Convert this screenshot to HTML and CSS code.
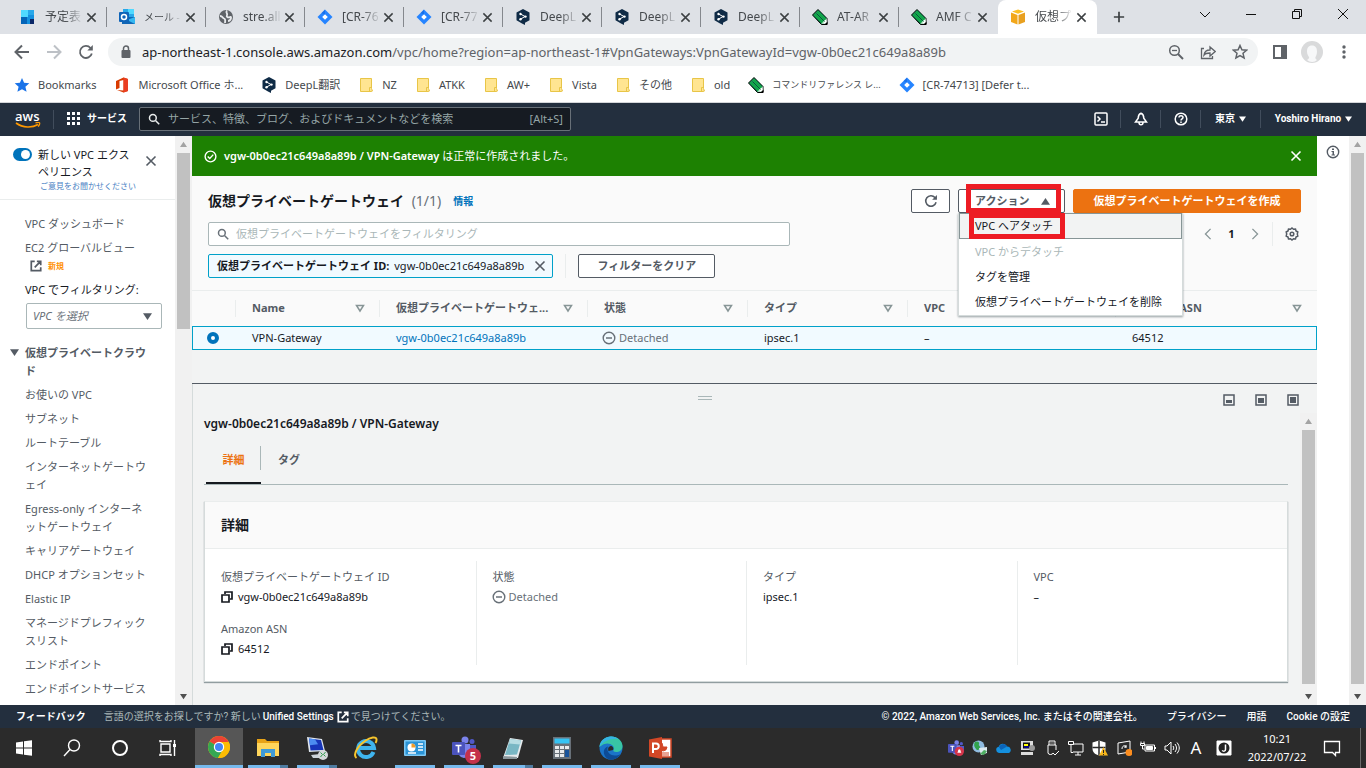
FILE: index.html
```html
<!DOCTYPE html>
<html lang="ja">
  <head>
    <meta charset="UTF-8" />
    <meta name="viewport" content="width=device-width, initial-scale=1.0" />
    <title>仮想プライベートゲートウェイ | VPC</title>
    <link rel="stylesheet" href="styles.css">
  </head>
  <body>
    <!-- Shared icons -->
    <svg class="sprite" aria-hidden="true">
      <symbol id="i-x" viewBox="0 0 12 12"><path d="M1.5 1.5l9 9M10.5 1.5l-9 9" fill="none" stroke="currentColor" stroke-width="1.6" /></symbol>
      <symbol id="i-deepl" viewBox="0 0 16 16"><path d="M8 0l6.5 3.6v7.6L10 13.7V16l-3-1.600L1.500 11.200V3.600z" fill="#0f2b46" /><path d="M5.500 5l4.500 2.500L5.500 10.200" fill="none" stroke="#fff" /><circle cx="5.500" cy="5" r="1.200" fill="#fff" /><circle cx="10.500" cy="7.600" r="1.200" fill="#fff" /><circle cx="5.500" cy="10.200" r="1.200" fill="#fff" /></symbol>
      <symbol id="i-jira" viewBox="0 0 16 16"><path d="M8 .5L15.500 8 8 15.500.5 8z" fill="#2684ff" /><path d="M8 5.200L10.800 8 8 10.800 5.200 8z" fill="#fff" /><path d="M8 .5L4.500 4 8 5.500z" fill="#0052cc" opacity=".4" /></symbol>
      <symbol id="i-pencil" viewBox="0 0 16 16"><path d="M.5 6L6 .5 15 9.500V15.500H9.500z" fill="#1c9a56" stroke="#000" /><path d="M9.500 14.500L14.500 9.500l.5 5.500z" fill="#fff" /><path d="M3 5.500l8 8M5.500 3l8 8" stroke="#0b3" /><path d="M2 7l7 7M4.500 4.500l8 8M7 2l7 7" stroke="#063" /><path d="M12.500 15.500h3v-3z" fill="#000" /></symbol>
      <symbol id="i-folder" viewBox="0 0 16 16"><path d="M2.500 1.500h11v10l1 2.500-1.500.5H2.500z" fill="#ffe591" stroke="#e8c547" /><path d="M11.500 14.500v-4h2" fill="none" stroke="#e8c547" /></symbol>
      <symbol id="i-search" viewBox="0 0 16 16"><circle cx="6.500" cy="6.500" r="4.500" fill="none" stroke="currentColor" stroke-width="2" /><path d="M10 10l5 5" stroke="currentColor" stroke-width="2" /></symbol>
      <symbol id="i-ext" viewBox="0 0 14 14"><path d="M5.500 1.500h-4v11h11v-4M8 1.500h4.500V6M12 2L5.500 8.500" fill="none" stroke="currentColor" stroke-width="2" /></symbol>
      <symbol id="i-reload" viewBox="0 0 16 16"><path d="M13.800 9.500A6 6 0 1 1 12.500 4l1 1" fill="none" stroke="currentColor" stroke-width="1.800" /><path d="M14.800 1v5.500H9.300z" fill="currentColor" /></symbol>
      <symbol id="i-minus" viewBox="0 0 14 14"><circle cx="7" cy="7" r="5.800" fill="none" stroke="currentColor" stroke-width="1.400" /><path d="M4 7h6" stroke="currentColor" stroke-width="1.500" /></symbol>
      <symbol id="i-copy" viewBox="0 0 12 12"><path d="M4 3V1h7v7H9" fill="none" stroke="currentColor" stroke-width="1.700" /><path d="M1 4h7v7H1z" fill="#fff" stroke="currentColor" stroke-width="1.700" /></symbol>
      <symbol id="i-down" viewBox="0 0 10 10"><path d="M0 1.500h10L5 9z" fill="currentColor" /></symbol>
      <symbol id="i-up" viewBox="0 0 10 10"><path d="M0 8.500h10L5 1z" fill="currentColor" /></symbol>
      <symbol id="i-sort" viewBox="0 0 10 10"><path d="M1.500 2.500h7L5 8z" fill="none" stroke="currentColor" stroke-width="1.500" /></symbol>
      <symbol id="i-teams" viewBox="0 0 24 24"><circle cx="13" cy="4" r="3.500" fill="#7b83eb" /><circle cx="20" cy="5.500" r="2.500" fill="#5059c9" /><path d="M16 9h8v7a4 4 0 0 1-7 2z" fill="#5059c9" /><path d="M7 8h11v9a6 6 0 0 1-11 2z" fill="#7b83eb" /><rect y="6" width="13" height="13" rx="1" fill="#4b53bc" /><path d="M3.500 9.500h6M6.500 9.500v7" stroke="#fff" stroke-width="1.600" /></symbol>
    </svg>

    <!-- Browser tabs -->
    <div class="tab-strip">
      <div class="tab"><svg class="fav" viewBox="0 0 16 16"><rect x="1" y="1" width="13" height="14" rx="1" fill="#1490df" /><path d="M1 1h7v7H1z" fill="#50d9ff" /><path d="M8 1h6v5H8z" fill="#28a8ea" /><path d="M1 8h6v7H1z" fill="#0364b8" /><path d="M10 10h4v5h-4z" fill="#0a2767" /></svg><span class="tab-title">予定表</span><button aria-label="閉じる"><svg><use href="#i-x" /></svg></button></div>
      <div class="tab"><svg class="fav" viewBox="0 0 16 16"><path d="M4 0h11v9H4z" fill="#28a8ea" /><path d="M9 0h6v5H9z" fill="#50d9ff" /><path d="M3 8l13 0v7H3z" fill="#1066b5" /><path d="M16 8v7l-8-4z" fill="#35b8f1" /><rect y="3" width="10" height="10" rx="1" fill="#0f64b8" /><circle cx="5" cy="8" r="2.500" fill="none" stroke="#fff" stroke-width="1.500" /></svg><span class="tab-title kana">メール -</span><button aria-label="閉じる"><svg><use href="#i-x" /></svg></button></div>
      <div class="tab"><svg class="fav" viewBox="0 0 16 16"><circle cx="8" cy="8" r="7" fill="#5f6368" /><path d="M2 7c3 0 2 2 4 2.500S7 13 7 14M9 1.500C7 4 10 4 9 6s1 3 3 2 1 4-2 4" fill="none" stroke="#e8eaed" stroke-width="1.800" /></svg><span class="tab-title">stre.all</span><button aria-label="閉じる"><svg><use href="#i-x" /></svg></button></div>
      <div class="tab"><svg class="fav"><use href="#i-jira" /></svg><span class="tab-title">[CR-76</span><button aria-label="閉じる"><svg><use href="#i-x" /></svg></button></div>
      <div class="tab"><svg class="fav"><use href="#i-jira" /></svg><span class="tab-title">[CR-77</span><button aria-label="閉じる"><svg><use href="#i-x" /></svg></button></div>
      <div class="tab"><svg class="fav"><use href="#i-deepl" /></svg><span class="tab-title">DeepL</span><button aria-label="閉じる"><svg><use href="#i-x" /></svg></button></div>
      <div class="tab"><svg class="fav"><use href="#i-deepl" /></svg><span class="tab-title">DeepL</span><button aria-label="閉じる"><svg><use href="#i-x" /></svg></button></div>
      <div class="tab"><svg class="fav"><use href="#i-deepl" /></svg><span class="tab-title">DeepL</span><button aria-label="閉じる"><svg><use href="#i-x" /></svg></button></div>
      <div class="tab"><svg class="fav"><use href="#i-pencil" /></svg><span class="tab-title">AT-AR</span><button aria-label="閉じる"><svg><use href="#i-x" /></svg></button></div>
      <div class="tab last"><svg class="fav"><use href="#i-pencil" /></svg><span class="tab-title">AMF C</span><button aria-label="閉じる"><svg><use href="#i-x" /></svg></button></div>
      <div class="tab active"><svg class="fav" viewBox="0 0 16 16"><path d="M8 .5l6 2-6 2.300-6-2.300z" fill="#fbbf24" /><path d="M1 3.500L7.500 6v9.500L1 13z" fill="#f2a71b" /><path d="M15 3.500L8.500 6v9.500L15 13z" fill="#e8a020" /></svg><span class="tab-title">仮想プ</span><button aria-label="閉じる"><svg><use href="#i-x" /></svg></button></div>
      <button class="new-tab" aria-label="新しいタブ"><svg viewBox="0 0 14 14"><path d="M7 1v12M1 7h12" stroke="#3c4043" stroke-width="2" /></svg></button>
      <div class="window-controls">
        <button aria-label="タブを検索"><svg viewBox="0 0 12 12"><path d="M1 4l5 5 5-5" /></svg></button>
        <button aria-label="最小化"><svg viewBox="0 0 12 12"><path d="M1 6.500h10" /></svg></button>
        <button aria-label="元に戻す"><svg viewBox="0 0 12 12"><path d="M1.500 3.500h7v7h-7zM3.500 3.500v-2h7v7h-2" /></svg></button>
        <button aria-label="閉じる"><svg viewBox="0 0 12 12"><path d="M1 1l10 10M11 1L1 11" /></svg></button>
      </div>
    </div>

    <!-- Address bar -->
    <div class="toolbar">
      <button aria-label="戻る"><svg viewBox="0 0 16 16"><path d="M15 8H2M8 1.500L1.500 8 8 14.500" fill="none" stroke="#5f6368" stroke-width="2" /></svg></button>
      <button aria-label="進む"><svg viewBox="0 0 16 16"><path d="M1 8h13M8 1.500L14.500 8 8 14.500" fill="none" stroke="#bdc1c6" stroke-width="2" /></svg></button>
      <button aria-label="再読み込み"><svg><use href="#i-reload" /></svg></button>
      <div class="address">
        <svg class="lock" viewBox="0 0 12 14"><rect x="1.500" y="5" width="9" height="8" rx="1" fill="#5f6368" /><path d="M3.500 6V3.500a2.500 2.500 0 0 1 5 0V6" fill="none" stroke="#5f6368" stroke-width="1.500" /></svg>
        <span class="url"><b>ap-northeast-1.console.aws.amazon.com</b>/vpc/home?region=ap-northeast-1#VpnGateways:VpnGatewayId=vgw-0b0ec21c649a8a89b</span>
        <button aria-label="ズーム"><svg viewBox="0 0 16 16"><circle cx="6.500" cy="6.500" r="4.800" fill="none" stroke="#5f6368" stroke-width="1.500" /><path d="M10 10l5 5" stroke="#5f6368" stroke-width="2" /><path d="M4 6.500h5" stroke="#5f6368" stroke-width="1.300" /></svg></button>
        <button aria-label="共有"><svg viewBox="0 0 16 16"><path d="M4 4.500H1.500v10h11V12" fill="none" stroke="#5f6368" stroke-width="1.300" /><path d="M4 11c.5-4 3-5 6-5V3l5.200 4.500L10 12V9c-3 0-4.500 0-6 2z" fill="none" stroke="#5f6368" stroke-width="1.300" /></svg></button>
        <button aria-label="ブックマーク"><svg viewBox="0 0 16 16"><path d="M8 1.500l1.900 4.300 4.700.4-3.600 3.100 1.100 4.600L8 11.500l-4.100 2.400L5 9.300 1.400 6.200l4.700-.4z" fill="none" stroke="#5f6368" stroke-width="1.500" /></svg></button>
      </div>
      <button aria-label="サイドパネル"><svg viewBox="0 0 16 16"><path d="M2 2h12v12H2z" fill="none" stroke="#5f6368" stroke-width="2" /><path d="M9 2h5v12H9z" fill="#5f6368" /></svg></button>
      <button aria-label="プロフィール"><svg class="avatar" viewBox="0 0 22 22"><circle cx="11" cy="11" r="11" fill="#d9dadb" /><path d="M11 4.500c-3.500 0-5 2.500-5 6 0 3 1.500 4.500 2 5.500s-.5 2-2 3c3 2.500 7.500 2.500 10 0-1.500-1-2-2-1.500-3s1.500-2.500 1.500-5.500c0-3.500-1.500-6-5-6z" fill="#f7f8f9" /></svg></button>
      <button aria-label="メニュー"><svg viewBox="0 0 16 16" fill="#5f6368"><circle cx="8" cy="3" r="1.700" /><circle cx="8" cy="8" r="1.700" /><circle cx="8" cy="13" r="1.700" /></svg></button>
    </div>

    <!-- Bookmarks -->
    <nav class="bookmarks">
      <a href="#"><svg viewBox="0 0 16 16"><path d="M8 1l2.100 4.800 5.200.5-3.900 3.400 1.200 5.100L8 12.200l-4.600 2.600 1.200-5.100L.7 6.300l5.200-.5z" fill="#1a73e8" /></svg>Bookmarks</a>
      <a href="#"><svg viewBox="0 0 16 16"><path d="M9.500.5L14 2v12l-4.500 1.500L3 13l6.500.5V3L5.500 4v7L2 12.500V4z" fill="#d83b01" /><path d="M9.500.5L14 2v12l-4.500 1.500z" fill="#ea3e23" /></svg>Microsoft Office ホ...</a>
      <a href="#"><svg><use href="#i-deepl" /></svg>DeepL翻訳</a>
      <a href="#"><svg><use href="#i-folder" /></svg>NZ</a>
      <a href="#"><svg><use href="#i-folder" /></svg>ATKK</a>
      <a href="#"><svg><use href="#i-folder" /></svg>AW+</a>
      <a href="#"><svg><use href="#i-folder" /></svg>Vista</a>
      <a href="#"><svg><use href="#i-folder" /></svg>その他</a>
      <a href="#"><svg><use href="#i-folder" /></svg>old</a>
      <a href="#" class="kana"><svg><use href="#i-pencil" /></svg>コマンドリファレンス レ...</a>
      <a href="#"><svg><use href="#i-jira" /></svg>[CR-74713] [Defer t...</a>
    </nav>

    <!-- AWS header -->
    <header class="aws-header">
      <a href="#" class="logo"><b>aws</b><svg viewBox="0 0 26 7"><path d="M1 1c7 5 16 5 22 1.500" fill="none" stroke="#ff9900" stroke-width="1.600" /><path d="M20.500.8c2-.5 3.500-.4 4 0s0 2.300-1.300 3.900" fill="none" stroke="#ff9900" stroke-width="1.300" /></svg></a>
      <button class="services"><svg viewBox="0 0 14 14" fill="#fff"><path d="M0 0h3v3H0zM5 0h3v3H5zM10 0h3v3h-3zM0 5h3v3H0zM5 5h3v3H5zM10 5h3v3h-3zM0 10h3v3H0zM5 10h3v3H5zM10 10h3v3h-3z" /></svg>サービス</button>
      <label class="global-search">
        <svg><use href="#i-search" /></svg>
        <input type="text" placeholder="サービス、特徴、ブログ、およびドキュメントなどを検索" aria-label="検索" />
        <span>[Alt+S]</span>
      </label>
      <div class="header-right">
        <button aria-label="CloudShell"><svg viewBox="0 0 14 14"><rect x="1" y="1" width="12" height="12" rx="1" /><path d="M3.500 4.500L6 7 3.500 9.500M7 10h4" /></svg></button>
        <button aria-label="通知"><svg viewBox="0 0 14 14"><path d="M7 1.200c-2 .8-2.800 2-2.800 5L1.500 10h11L9.800 6.200c0-3-.8-4.200-2.800-5zM5 10.500c0 3 4 3 4 0" /></svg></button>
        <button aria-label="ヘルプ"><svg viewBox="0 0 14 14"><circle cx="7" cy="7" r="5.800" /><path d="M5 5.500c0-2.500 4-2.500 4 0C9 7 7 6.800 7 8.500M7 9.500v1.500" /></svg></button>
        <button class="region">東京<svg class="caret"><use href="#i-down" /></svg></button>
        <button class="user">Yoshiro Hirano<svg class="caret"><use href="#i-down" /></svg></button>
      </div>
    </header>

    <div class="console">
      <!-- Side navigation -->
      <aside class="sidebar">
        <div class="experience">
          <input type="checkbox" id="new-exp" checked />
          <div class="exp-text">
            <label for="new-exp">新しい VPC エクスペリエンス</label>
            <a href="#">ご意見をお聞かせください</a>
          </div>
          <button aria-label="閉じる"><svg><use href="#i-x" /></svg></button>
        </div>
        <nav class="side-nav">
          <a href="#">VPC ダッシュボード</a>
          <a href="#">EC2 グローバルビュー <span class="new-row"><svg><use href="#i-ext" /></svg><b>新規</b></span></a>
          <label for="vpc-filter">VPC でフィルタリング:</label>
          <div class="select-wrap">
            <select id="vpc-filter"><option>VPC を選択</option></select>
            <svg><use href="#i-down" /></svg>
          </div>
          <h3><svg><use href="#i-down" /></svg>仮想プライベートクラウド</h3>
          <a href="#">お使いの VPC</a>
          <a href="#">サブネット</a>
          <a href="#">ルートテーブル</a>
          <a href="#">インターネットゲートウェイ</a>
          <a href="#">Egress-only インターネットゲートウェイ</a>
          <a href="#">キャリアゲートウェイ</a>
          <a href="#">DHCP オプションセット</a>
          <a href="#">Elastic IP</a>
          <a href="#">マネージドプレフィックスリスト</a>
          <a href="#">エンドポイント</a>
          <a href="#">エンドポイントサービス</a>
        </nav>
      </aside>
      <div class="scrollbar side-scroll"><svg class="off"><use href="#i-up" /></svg><i></i><svg><use href="#i-down" /></svg></div>

      <main>
        <div class="flash">
          <svg viewBox="0 0 14 14"><circle cx="7" cy="7" r="5.800" fill="none" stroke="#fff" stroke-width="1.500" /><path d="M4 7l2.200 2.200L10 5" fill="none" stroke="#fff" stroke-width="1.500" /></svg>
          <p><b>vgw-0b0ec21c649a8a89b / VPN-Gateway</b> は正常に作成されました。</p>
          <button aria-label="閉じる"><svg><use href="#i-x" /></svg></button>
        </div>

        <section class="resources">
          <div class="title-row">
            <h1>仮想プライベートゲートウェイ <span>(1/1)</span></h1>
            <a href="#">情報</a>
            <div class="actions">
              <button class="btn refresh" aria-label="更新"><svg><use href="#i-reload" /></svg></button>
              <div class="dropdown">
                <button class="btn action-btn">アクション<svg><use href="#i-up" /></svg></button>
                <div class="menu">
                  <button class="selected">VPC へアタッチ</button>
                  <button disabled>VPC からデタッチ</button>
                  <button>タグを管理</button>
                  <button>仮想プライベートゲートウェイを削除</button>
                </div>
                <div class="mark mark-action"></div>
                <div class="mark mark-attach"></div>
              </div>
              <button class="btn primary">仮想プライベートゲートウェイを作成</button>
            </div>
          </div>

          <div class="filter-row">
            <label class="filter-input">
              <svg><use href="#i-search" /></svg>
              <input type="text" placeholder="仮想プライベートゲートウェイをフィルタリング" aria-label="フィルタリング" />
            </label>
            <div class="pager">
              <button aria-label="前へ"><svg viewBox="0 0 10 14"><path d="M8 1L2 7l6 6" /></svg></button>
              <b>1</b>
              <button aria-label="次へ"><svg viewBox="0 0 10 14"><path d="M2 1l6 6-6 6" /></svg></button>
              <button class="gear" aria-label="設定"><svg viewBox="0 0 14 14"><path d="M7 1l1.500 1.300 2-.3.500 2L12.800 5 12.300 7l.5 2-1.800 1-.5 2-2-.3L7 13l-1.500-1.300-2 .3-.5-2L1.200 9l.5-2-.5-2L3 4l.5-2 2 .3z" /><circle cx="7" cy="7" r="1.800" /></svg></button>
            </div>
          </div>

          <div class="token-row">
            <div class="token"><b>仮想プライベートゲートウェイ ID:</b> vgw-0b0ec21c649a8a89b<button aria-label="削除"><svg><use href="#i-x" /></svg></button></div>
            <div class="clear"><button class="btn">フィルターをクリア</button></div>
          </div>

          <table>
            <colgroup><col class="c-radio" /><col class="c-name" /><col class="c-wide" /><col class="c-mid" /><col class="c-mid" /><col class="c-wide" /><col /></colgroup>
            <thead>
              <tr>
                <th></th>
                <th><div>Name<svg><use href="#i-sort" /></svg></div></th>
                <th><div>仮想プライベートゲートウェ...<svg><use href="#i-sort" /></svg></div></th>
                <th><div>状態<svg><use href="#i-sort" /></svg></div></th>
                <th><div>タイプ<svg><use href="#i-sort" /></svg></div></th>
                <th><div>VPC<svg><use href="#i-sort" /></svg></div></th>
                <th><div>Amazon ASN<svg><use href="#i-sort" /></svg></div></th>
              </tr>
            </thead>
            <tbody>
              <tr>
                <td><input type="radio" name="gateway" aria-label="VPN-Gateway" checked /></td>
                <td>VPN-Gateway</td>
                <td><a href="#">vgw-0b0ec21c649a8a89b</a></td>
                <td><span class="status"><svg><use href="#i-minus" /></svg>Detached</span></td>
                <td>ipsec.1</td>
                <td>–</td>
                <td>64512</td>
              </tr>
            </tbody>
          </table>
        </section>

        <!-- Split panel -->
        <section class="split">
          <div class="split-bar">
            <span class="handle"></span>
            <div class="split-sizes">
              <button aria-label="小"><svg viewBox="0 0 12 12"><path d="M1 1h10v10H1z" /><path class="fill" d="M3 6h6v3H3z" /></svg></button>
              <button aria-label="中"><svg viewBox="0 0 12 12"><path d="M1 1h10v10H1z" /><path class="fill" d="M3 4h6v5H3z" /></svg></button>
              <button aria-label="大"><svg viewBox="0 0 12 12"><path d="M1 1h10v10H1z" /><path class="fill" d="M3 3h6v6H3z" /></svg></button>
            </div>
          </div>
          <div class="split-body">
            <div class="detail">
              <h2>vgw-0b0ec21c649a8a89b / VPN-Gateway</h2>
              <div class="detail-tabs">
                <button class="on">詳細</button>
                <button>タグ</button>
              </div>
              <div class="card">
                <h3>詳細</h3>
                <div class="card-cols">
                  <dl>
                    <dt>仮想プライベートゲートウェイ ID</dt>
                    <dd><svg><use href="#i-copy" /></svg>vgw-0b0ec21c649a8a89b</dd>
                    <dt>Amazon ASN</dt>
                    <dd><svg><use href="#i-copy" /></svg>64512</dd>
                  </dl>
                  <dl>
                    <dt>状態</dt>
                    <dd><span class="status"><svg><use href="#i-minus" /></svg>Detached</span></dd>
                  </dl>
                  <dl>
                    <dt>タイプ</dt>
                    <dd>ipsec.1</dd>
                  </dl>
                  <dl>
                    <dt>VPC</dt>
                    <dd>–</dd>
                  </dl>
                </div>
              </div>
            </div>
            <div class="scrollbar"><svg class="off"><use href="#i-up" /></svg><i></i><svg><use href="#i-down" /></svg></div>
          </div>
        </section>
      </main>

      <div class="help"><button aria-label="情報"><svg viewBox="0 0 14 14"><circle cx="7" cy="7" r="5.700" fill="none" stroke="#545b64" stroke-width="1.400" /><path d="M6 3.500h2v1.500H6zM5.500 6H8v3.500h1v1H5.500v-1h1V7h-1z" fill="#545b64" /></svg></button></div>
      <div class="scrollbar"><svg class="off"><use href="#i-up" /></svg><i></i><svg><use href="#i-down" /></svg></div>
    </div>

    <footer>
      <button>フィードバック</button>
      <p>言語の選択をお探しですか? 新しい <a href="#">Unified Settings <svg><use href="#i-ext" /></svg></a> で見つけてください。</p>
      <span class="copyright">© 2022, Amazon Web Services, Inc. またはその関連会社。</span>
      <a href="#">プライバシー</a>
      <a href="#">用語</a>
      <a href="#">Cookie の設定</a>
    </footer>

    <!-- Windows taskbar -->
    <div class="taskbar">
      <button aria-label="スタート"><svg viewBox="0 0 24 24" fill="#fff"><path d="M4 6.500l7-1V11.500H4zM12 5.300l8-1.100v7.300h-8zM4 12.500h7v6l-7-1zM12 12.500h8v7.300l-8-1.100z" /></svg></button>
      <button aria-label="検索"><svg viewBox="0 0 24 24" fill="none" stroke="#fff" stroke-width="1.400"><circle cx="14" cy="9.500" r="5.500" /><path d="M10 13.500L4 20" /></svg></button>
      <button aria-label="Cortana"><svg viewBox="0 0 24 24"><circle cx="12" cy="12" r="7" fill="none" stroke="#fff" stroke-width="2" /></svg></button>
      <button aria-label="タスクビュー"><svg viewBox="0 0 24 24" fill="none" stroke="#fff" stroke-width="1.400"><path d="M5 8h9v8H5zM4 4v1.500h11V4M4 20v-1.500h11V20M18.500 4v16" /><path d="M17 8h3v3h-3z" fill="#fff" stroke="none" /></svg></button>
      <div class="apps">
        <button class="current" aria-label="Chrome"><svg viewBox="0 0 24 24"><circle cx="12" cy="12" r="11" fill="#fbbc04" /><path d="M12 12L2.500 6.500a11 11 0 0 1 19 0z" fill="#ea4335" /><path d="M12 12L2.500 6.500a11 11 0 0 0 8.500 16.500l5-8.500z" fill="#34a853" /><path d="M12 7h9.700a11 11 0 0 1-10.700 16l5-8.500z" fill="#fbbc04" /><circle cx="12" cy="12" r="5.200" fill="#fff" /><circle cx="12" cy="12" r="4" fill="#4285f4" /></svg></button>
        <button class="open more" aria-label="エクスプローラー"><svg viewBox="0 0 24 24"><path d="M1 3h8l2 2h12v15H1z" fill="#e8a317" /><path d="M1 7h22v13H1z" fill="#ffd65c" /><path d="M5 21v-8h14v8h-4v-4H9v4z" fill="#3f9ad6" /></svg></button>
        <button class="open more" aria-label="リモートデスクトップ"><svg viewBox="0 0 24 24"><path d="M2 1l15 2 3 12-16 1z" fill="#dfe6ee" /><path d="M4 2.500l12 1.500 2.500 10-13 .5z" fill="#1735b8" /><path d="M4 2.500l6 .8 3 5-8 1z" fill="#4c8cf0" /><path d="M6 19l9-1 3 4H8z" fill="#cdd3da" /><circle cx="18" cy="19" r="5" fill="#d5d8da" /><path d="M15.500 16.500l2 2-2 2.500M20.500 16l-2 2.500 2 2" fill="none" stroke="#2e9e4b" /></svg></button>
        <button aria-label="Internet Explorer"><svg viewBox="0 0 24 24"><path d="M19.500 16A8 8 0 1 1 20 12H6" fill="none" stroke="#3fb4ee" stroke-width="4" /><path d="M2.500 22c-4-3 1-12 8.500-17 5-3.500 12-5.500 11.500-1 0 1-.3 2-1 3" fill="none" stroke="#f7c52d" stroke-width="2" /></svg></button>
        <button class="open" aria-label="コントロールパネル"><svg viewBox="0 0 24 24"><rect x="1" y="4" width="22" height="16" rx="1" fill="#7cc8f4" /><rect x="2.500" y="5.500" width="19" height="13" fill="#2a93d6" /><circle cx="8.500" cy="11.500" r="4" fill="#fff" /><path d="M8.500 11.500v-4a4 4 0 0 1 4 4z" fill="#f39c27" /><path d="M15 8h5M15 11h5M15 14h5M5 17h8" stroke="#fff" stroke-width="1.400" /></svg></button>
        <button class="open" aria-label="Teams"><svg viewBox="0 0 24 24"><use href="#i-teams" /></svg><span class="badge">5</span></button>
        <button class="open more" aria-label="メモ帳"><svg viewBox="0 0 24 24"><path d="M9 2l13 2-5 18H2z" fill="#e6ebee" /><path d="M9 3l11 1.500-4 14L4 19z" fill="#79b7c4" /><path d="M9 3l11 1.500-1 4-11-1z" fill="#b8dde3" /><path d="M2 20l14 1v2H2z" fill="#8b979c" /></svg></button>
        <button class="open" aria-label="電卓"><svg viewBox="0 0 24 24"><rect x="3" y="1" width="18" height="22" fill="#687078" /><path d="M4.500 2.500h15v5h-15z" fill="#35c3f3" /><path d="M5 10h4v3H5zM10 10h4v3h-4zM15 10h4v3h-4zM5 14h4v3H5zM10 14h4v3h-4zM5 18h4v3H5zM10 18h4v3h-4z" fill="#e8eaec" /><path d="M15 14h4v7h-4z" fill="#19539a" /></svg></button>
        <button class="open" aria-label="Edge"><svg viewBox="0 0 24 24"><circle cx="12" cy="12" r="11.500" fill="#1b74c9" /><path d="M.5 11C1 4 7 .5 12 .5c7 0 11.500 5 11.500 9.500 0 4-3 6-6.500 6-2 0-3-1-2.500-2 2-4-4-8-9-6-2 .7-4 2-5 3z" fill="#38c5a5" /><path d="M.5 11C1 4 7 .5 12 .5c3 0 5.500 1 7.500 2.500C12 2 4 5 .5 11z" fill="#35b4e3" /><path d="M9 10.500c-2 4 1 9 7 9 2 0 4-.5 5.500-1.500-2 4-6 5.500-9.500 5.500-5 0-8-5-7-9 .5-2 2-3.500 4-4z" fill="#0d4b96" /><path d="M14 14c1-1.500 0-3-1.500-4-3 0-4 2.500-3 5z" fill="#2b2b2b" /></svg></button>
        <button class="open" aria-label="PowerPoint"><svg viewBox="0 0 24 24"><path d="M10 3h13v18H10z" fill="#fff" stroke="#d24726" stroke-width="1.500" /><path d="M14 7a4 4 0 1 0 5 4h-4zM14 17h7M14 19h7" fill="#d24726" stroke="#d24726" /><path d="M1 3.500L14 1v22L1 20.500z" fill="#d24726" /><path d="M5 17V7.500h3a2.500 2.500 0 0 1 0 5.500H5" fill="none" stroke="#fff" stroke-width="2" /></svg></button>
      </div>
      <div class="tray">
        <svg viewBox="0 0 24 24"><use href="#i-teams" /><circle cx="17" cy="17" r="7" fill="#d5354a" /><path d="M14 19h6l-1-2c0-4-4-4-4 0z" fill="#fff" /></svg>
        <svg viewBox="0 0 16 16"><circle cx="6.500" cy="6.500" r="6" fill="#8fbbe0" /><path d="M3 2c2-1.500 5 0 4 2s2 2 1 4-3 3-4 1-3-3-1-7z" fill="#31a24c" /><path d="M7 8l8-1v6l-6 2z" fill="#dceaf0" /><path d="M8 14l4-4 3 1-3 4z" fill="#4fae62" /></svg>
        <svg viewBox="0 0 16 16"><path d="M3 13a3.200 3.200 0 0 1-.3-6.300C4 3 9 2.500 11 6.500a3.500 3.500 0 0 1 2 6.500z" fill="#1490df" /><path d="M3 7C5 3 9.500 3 11 6.500L5 10z" fill="#0b64b9" /></svg>
        <svg viewBox="0 0 16 16"><path d="M1 1h12v9H1zM1 12h12v3H1z" fill="#dcdcdc" /><path d="M3 2.500h7v6H3z" fill="#111" /><path d="M4 4h4v2H4z" fill="#ff0" /><path d="M4 7h5" stroke="#00f" /><circle cx="12" cy="8" r="3" fill="#9a9a9a" /></svg>
        <svg class="line" viewBox="0 0 16 16"><path d="M5 5V1h6v4M4 5h8v5M4 5v8c0 2 5 2 5 0M7 2.500v1M9 2.500v1M9 13l2 2 4-4" /></svg>
        <svg class="line" viewBox="0 0 16 16"><path d="M5 4h10v8H5M10 12v3M7 15h6M.5 1.500h5v3h-5zM3 4.500v8h2" /></svg>
        <svg viewBox="0 0 16 16"><path d="M7 .5l6.500 2v6c0 4-3 6-6.500 7-3.500-1-6.500-3-6.500-7v-6z" fill="#fff" /><path d="M7 .5v15M.5 7.500h13" stroke="#2b2b2b" stroke-width="1.500" /><path d="M11.500 7l4.500 8.500H7z" fill="#f8b71c" /><path d="M11.500 10v3M11.500 14v1" stroke="#222" /></svg>
        <svg class="line" viewBox="0 0 16 16"><path d="M2 3l12-2v11L2 14zM6 9c0-4 4-4 4-2M10 7v1M10 5v2H8" /><circle cx="13" cy="12.500" r="3.500" fill="#fc8d1f" stroke="none" /></svg>
        <svg class="line" viewBox="0 0 16 16"><path d="M5 5h9.500v6H5zM15.500 7v2" /><path d="M6.500 6.500h6v3h-6z" fill="#fff" /><path d="M1 1.500v2M4 1.500v2M.5 3.500h4v2h-4zM2.500 6v3h2" /></svg>
        <svg class="line" viewBox="0 0 16 16"><path d="M1 6h2l4-4v12l-4-4H1zM9 6c1 1.500 1 2.500 0 4M11 4c2 3 2 5 0 8M13 2.500c3 4 3 7 0 11" /></svg>
        <span class="ime">A</span>
        <svg class="line" viewBox="0 0 16 16"><path d="M1 1h14v14H1z" fill="#fff" /><circle cx="8" cy="8" r="5.500" fill="#222" stroke="none" /><path d="M9.500 4.500v5c0 2-2 2-3.500 1" stroke-width="1.500" /></svg>
      </div>
      <div class="clock">10:21<br>2022/07/22</div>
      <button class="notice" aria-label="通知"><svg viewBox="0 0 18 18"><path d="M1.500 2.500h15v11h-4v3l-3-3h-8z" fill="none" stroke="#fff" stroke-width="1.300" /></svg></button>
    </div>
  </body>
</html>
```
FILE: styles.css
```css
/* General */
* {
  box-sizing: border-box;
}

body {
  margin: 0;
  height: 100vh;
  display: flex;
  flex-direction: column;
  overflow: hidden;
  font-family: "Noto Sans", "Noto Sans CJK JP", sans-serif;
  font-size: 11px;
  line-height: 18px;
  color: #16191f;
  background: #fff;
}

button {
  border: none;
  background: none;
  padding: 0;
  margin: 0;
  font: inherit;
  color: inherit;
  cursor: pointer;
  display: flex;
  align-items: center;
  justify-content: center;
}

a {
  text-decoration: none;
  color: inherit;
}

h1,
h2,
h3,
p,
dl,
dd {
  margin: 0;
}

svg {
  display: block;
  flex: none;
  width: 12px;
  height: 12px;
}

input {
  font: inherit;
  margin: 0;
}

.sprite {
  display: none;
}

/* Browser tabs */
.tab-strip {
  flex: none;
  display: flex;
  height: 34px;
  padding-left: 8px;
  background: #dee1e6;
}

.tab {
  display: flex;
  align-items: center;
  flex: 0 1 99px;
  min-width: 0;
  padding: 0 10px 0 12px;
  color: #45494d;
  font-size: 12px;
  background: linear-gradient(#85888d, #85888d) right center / 1px 20px no-repeat;
}

.tab.last {
  background: none;
}

.tab.active {
  background: #fff;
  border-radius: 8px 8px 0 0;
}

.tab-title {
  flex: 1;
  min-width: 0;
  margin: 0 2px 0 9px;
  overflow: hidden;
  white-space: nowrap;
  mask-image: linear-gradient(to right, #000 50%, transparent);
}

.tab-title.kana {
  font-size: 10px;
}

.fav {
  width: 16px;
  height: 16px;
}

.tab button svg {
  width: 11px;
  height: 11px;
  color: #3c4043;
}

.new-tab {
  flex: none;
  width: 44px;
}

.window-controls {
  display: flex;
  flex: none;
  height: 28px;
  margin-left: auto;
}

.window-controls button {
  width: 46px;
}

.window-controls path {
  fill: none;
  stroke: #111;
}

/* Address bar */
.toolbar {
  flex: none;
  display: flex;
  align-items: center;
  height: 36px;
  padding: 0 6px;
}

.toolbar button {
  width: 32px;
  height: 28px;
  color: #5f6368;
}

.toolbar button svg {
  width: 16px;
  height: 16px;
}

.toolbar .avatar {
  width: 22px;
  height: 22px;
}

.address {
  flex: 1;
  display: flex;
  align-items: center;
  min-width: 0;
  height: 28px;
  margin: 0 6px;
  padding: 0 2px 0 12px;
  border-radius: 14px;
  background: #f1f3f4;
}

.lock {
  height: 14px;
  margin-right: 10px;
}

.url {
  flex: 1;
  overflow: hidden;
  white-space: nowrap;
  font-size: 13px;
  color: #5f6368;
}

.url b {
  font-weight: normal;
  color: #202124;
}

/* Bookmarks */
.bookmarks {
  flex: none;
  display: flex;
  align-items: center;
  gap: 18px;
  height: 33px;
  padding: 0 14px 2px;
  border-bottom: 1px solid #d4d6d9;
  color: #45494d;
  white-space: nowrap;
}

.bookmarks a {
  display: flex;
  align-items: center;
  gap: 8px;
}

.bookmarks svg {
  width: 16px;
  height: 16px;
}

.bookmarks .kana {
  font-size: 9px;
}

/* AWS header */
.aws-header {
  flex: none;
  display: flex;
  align-items: center;
  height: 33px;
  padding: 0 0 1px 15px;
  background: #232f3e;
  color: #fff;
  font-family: Roboto, "Noto Sans CJK JP", sans-serif;
  font-size: 10px;
  font-weight: bold;
}

.logo {
  width: 39px;
  border-right: 1px solid #414d5c;
  font-family: "Open Sans", sans-serif;
  font-size: 13px;
  line-height: 12px;
}

.logo b {
  display: block;
  font-weight: 600;
}

.logo svg {
  width: 26px;
  height: 7px;
}

.services {
  gap: 6px;
  margin: 0 12px 0 13px;
}

.services svg {
  width: 14px;
  height: 14px;
}

.global-search {
  display: flex;
  align-items: center;
  gap: 8px;
  width: 432px;
  height: 24px;
  padding: 0 7px 0 8px;
  border: 1px solid #687078;
  border-radius: 2px;
  background: #161b22;
  font-family: "Noto Sans", "Noto Sans CJK JP", sans-serif;
  font-size: 11px;
  font-weight: normal;
  color: #95a5a6;
}

.global-search svg {
  color: #eaeded;
}

.global-search input,
.filter-input input {
  flex: 1;
  min-width: 0;
  padding: 0;
  border: none;
  outline: none;
  background: none;
  color: inherit;
}

.global-search input::placeholder {
  color: #95a5a6;
}

.header-right {
  display: flex;
  margin-left: auto;
}

.header-right button {
  width: 40px;
  height: 18px;
  border-right: 1px solid #414d5c;
}

.header-right svg {
  width: 14px;
  height: 14px;
  fill: none;
  stroke: #fff;
  stroke-width: 1.500;
}

.header-right .caret {
  width: 7px;
  height: 8px;
  margin-left: 4px;
  stroke: none;
}

.header-right .region {
  width: 60px;
}

.header-right .user {
  width: 105px;
  border: none;
}

/* Console layout */
.console {
  flex: 1;
  display: flex;
  min-height: 0;
}

.sidebar {
  flex: none;
  width: 175px;
  overflow: hidden;
}

.experience {
  display: flex;
  height: 64px;
  padding: 10px 0 0 13px;
  border-bottom: 1px solid #eaeded;
  line-height: 17px;
}

.experience input {
  appearance: none;
  flex: none;
  width: 19px;
  height: 13px;
  margin-top: 2px;
  border-radius: 7px;
  background: #0073bb;
}

.experience input::after {
  content: "";
  display: block;
  width: 9px;
  height: 9px;
  margin: 2px 2px 2px auto;
  border-radius: 50%;
  background: #fff;
}

.exp-text {
  width: 103px;
  padding-left: 6px;
  line-break: anywhere;
}

.exp-text a {
  display: block;
  padding-left: 2px;
  font-size: 8px;
  line-height: 12px;
  color: #4a7fc4;
  white-space: nowrap;
}

.experience button {
  width: 32px;
  height: 30px;
  color: #545b64;
}

.side-nav {
  padding: 15px 24px 0 25px;
  color: #545b64;
}

.side-nav > a {
  display: block;
  margin-bottom: 6px;
  line-break: loose;
}

.side-nav label {
  color: #16191f;
  line-height: 18px;
}

.new-row {
  display: flex;
  align-items: center;
  gap: 6px;
  padding-left: 5px;
  font-size: 8px;
  color: #ff8f00;
}

.new-row svg {
  color: #545b64;
}

.select-wrap {
  display: flex;
  align-items: center;
  height: 26px;
  margin: 4px -11px 15px 1px;
  padding-right: 9px;
  border: 1px solid #aab7b8;
  border-radius: 2px;
}

.select-wrap select {
  appearance: none;
  flex: 1;
  padding: 0 0 0 6px;
  border: none;
  outline: none;
  background: none;
  font: inherit;
  font-style: italic;
  color: #687078;
}

.select-wrap svg,
.side-nav h3 svg {
  width: 9px;
  height: 9px;
  color: #545b64;
}

.side-nav h3 {
  display: flex;
  margin: 0 0 6px -15px;
  font-size: 11px;
  line-break: loose;
}

.side-nav h3 svg {
  margin: 4px 6px 0 0;
}

/* Scrollbars */
.scrollbar {
  flex: none;
  display: flex;
  flex-direction: column;
  align-items: center;
  width: 17px;
  background: #f1f1f1;
}

.scrollbar svg {
  width: 7px;
  height: 17px;
  color: #505050;
}

.scrollbar .off {
  color: #a3a3a3;
}

.scrollbar i {
  flex: 1;
  width: 13px;
  background: #c1c1c1;
}

.scrollbar i + svg {
  margin-top: 4px;
}

.side-scroll i {
  flex: 0 0 31%;
}

.side-scroll i + svg {
  margin-top: auto;
}

/* Main area */
main {
  flex: 1;
  display: flex;
  flex-direction: column;
  min-width: 0;
  background: #f2f3f3;
}

.flash {
  flex: none;
  display: flex;
  align-items: center;
  height: 40px;
  padding: 0 15px 0 12px;
  background: #1d8102;
  color: #fff;
}

.flash > svg {
  width: 13px;
  height: 13px;
}

.flash p {
  flex: 1;
  margin-left: 7px;
}

.flash b {
  font-weight: 600;
}

.resources {
  flex: none;
  padding-bottom: 33px;
  border-bottom: 1px solid #545b64;
}

.title-row,
.filter-row,
.token-row {
  display: flex;
  align-items: center;
  padding: 0 16px;
  background: #fafafa;
}

.title-row {
  height: 46px;
  padding-top: 4px;
}

h1 {
  font-size: 14px;
  white-space: nowrap;
}

h1 span {
  margin-left: 4px;
  font-weight: normal;
  color: #687078;
}

.title-row > a {
  margin-left: 12px;
  font-size: 10px;
  font-weight: bold;
  color: #0073bb;
}

.actions {
  display: flex;
  gap: 8px;
  margin-left: auto;
}

.btn {
  height: 24px;
  padding: 0 18px;
  border: 1px solid #545b64;
  border-radius: 2px;
  background: #fff;
  color: #545b64;
  font-weight: 600;
  white-space: nowrap;
}

.btn svg {
  width: 14px;
  height: 14px;
}

.btn.refresh {
  width: 39px;
  padding: 0;
}

.btn.primary {
  width: 228px;
  border-color: #ec7211;
  background: #ec7211;
  color: #fff;
  font-weight: bold;
}

.dropdown {
  position: relative;
}

.action-btn {
  width: 107px;
  padding: 0 14px 0 16px;
  justify-content: space-between;
}

.action-btn svg {
  width: 9px;
  height: 9px;
}

.menu {
  position: absolute;
  top: 24px;
  left: 0;
  z-index: 1;
  width: 225px;
  height: 103px;
  background: #fff;
  border: 1px solid #d5dbdb;
  border-top: none;
  box-shadow: 0 1px 2px rgba(0, 28, 36, 0.4);
}

.menu button {
  width: 100%;
  height: 25px;
  padding-left: 16px;
  justify-content: flex-start;
}

.menu button:disabled {
  color: #aab7b8;
}

.menu .selected {
  height: 26px;
  padding-left: 15px;
  border: 1px solid #879596;
  background: #f2f3f3;
}

/* Red frames round the two clicks to make */
.mark {
  position: absolute;
  z-index: 2;
  border: 5px solid #ed1c24;
  pointer-events: none;
}

.mark-action {
  top: -5px;
  left: 8px;
  width: 95px;
  height: 29px;
}

.mark-attach {
  top: 24px;
  left: 11px;
  width: 96px;
  height: 26px;
}

.filter-row {
  height: 24px;
  padding-right: 15px;
  justify-content: space-between;
}

.filter-input {
  display: flex;
  align-items: center;
  gap: 7px;
  width: 582px;
  height: 24px;
  padding: 0 8px;
  border: 1px solid #aab7b8;
  border-radius: 2px;
  background: #fff;
}

.filter-input svg {
  color: #687078;
}

.filter-input input::placeholder {
  color: #aab7b8;
}

.pager {
  display: flex;
  align-items: center;
}

.pager button {
  width: 24px;
  height: 24px;
}

.pager b {
  width: 23px;
  text-align: center;
}

.pager path,
.pager circle {
  fill: none;
  stroke: #879596;
  stroke-width: 1.500;
}

.pager .gear {
  width: 30px;
  margin-left: 5px;
  padding-left: 9px;
  border-left: 1px solid #eaeded;
}

.gear svg {
  width: 14px;
  height: 14px;
}

.pager .gear path,
.pager .gear circle {
  stroke: #545b64;
}

.token-row {
  padding-top: 8px;
  padding-bottom: 12px;
}

.token {
  display: flex;
  align-items: center;
  gap: 5px;
  height: 24px;
  padding: 0 6px 0 8px;
  border: 1px solid #00a1c9;
  border-radius: 2px;
  background: #f1faff;
  white-space: nowrap;
}

.token button {
  margin-left: 5px;
  color: #545b64;
}

.clear {
  margin-left: 12px;
  padding-left: 12px;
  border-left: 1px solid #eaeded;
}

/* Table */
table {
  width: 100%;
  table-layout: fixed;
  border-collapse: separate;
  border-spacing: 0;
  border-top: 1px solid #eaeded;
}

.c-radio {
  width: 44px;
}

.c-name {
  width: 144px;
}

.c-wide {
  width: 208px;
}

.c-mid {
  width: 160px;
}

th {
  height: 35px;
  padding: 0 0 2px;
  background: #fafafa;
  color: #545b64;
  text-align: left;
  white-space: nowrap;
}

th div {
  display: flex;
  align-items: center;
  justify-content: space-between;
  padding: 0 15px 0 16px;
}

th:not(:last-child) {
  background: linear-gradient(#eaeded, #eaeded) right center / 1px 17px no-repeat #fafafa;
}

th svg {
  width: 10px;
  height: 10px;
  color: #879596;
}

td {
  height: 24px;
  padding: 0 0 0 16px;
  border: 1px solid #00a1c9;
  border-width: 1px 0;
  background: #f1faff;
}

td:first-child {
  padding-left: 14px;
  border-left-width: 1px;
}

td:last-child {
  border-right-width: 1px;
}

td a {
  color: #0073bb;
}

td input {
  appearance: none;
  display: block;
  width: 12px;
  height: 12px;
  border: 4px solid #0073bb;
  border-radius: 50%;
  background: #fff;
}

.status {
  display: flex;
  align-items: center;
  gap: 3px;
  margin-left: -2px;
  color: #687078;
}

.status svg {
  width: 14px;
  height: 14px;
}

/* Split panel */
.split {
  flex: 1;
  display: flex;
  flex-direction: column;
  min-height: 0;
  border-left: 1px solid #d5dbdb;
}

.split-bar {
  flex: none;
  display: flex;
  height: 29px;
  padding-right: 18px;
}

.handle {
  width: 14px;
  height: 4px;
  margin: 12px auto 0;
  border: 1px solid #aab7b8;
  border-width: 1px 0;
}

.split-sizes {
  display: flex;
  gap: 20px;
  padding: 3px 0 0 6px;
}

.split-sizes path {
  fill: none;
  stroke: #545b64;
  stroke-width: 1.500;
}

.split-sizes .fill {
  fill: #545b64;
  stroke: none;
}

.split-body {
  flex: 1;
  display: flex;
  min-height: 0;
}

.detail {
  flex: 1;
  padding: 2px 12px 0 11px;
}

.detail h2 {
  font-size: 12px;
  font-weight: 600;
}

.detail-tabs {
  display: flex;
  height: 52px;
  padding-left: 2px;
  border-bottom: 1px solid #aab7b8;
}

.detail-tabs button {
  width: 56px;
  padding: 2px 0 0;
  font-weight: bold;
  color: #545b64;
}

.detail-tabs .on {
  width: 55px;
  padding-top: 4px;
  border-bottom: 2px solid #16191f;
  color: #ec7211;
  background: linear-gradient(#aab7b8, #aab7b8) right center / 1px 24px no-repeat;
}

.card {
  margin-top: 16px;
  border: 1px solid #d5dbdb;
  border-top-color: #eaeded;
  background: #fff;
  box-shadow: 0 1px 1px rgba(0, 28, 36, 0.4);
}

.card h3 {
  padding: 14px 16px;
  border-bottom: 1px solid #eaeded;
  background: #fafafa;
  font-size: 14px;
}

.card-cols {
  display: grid;
  grid-template-columns: repeat(4, 1fr);
  padding: 12px 0 16px;
}

.card dl {
  min-height: 104px;
  padding: 7px 0 0 16px;
}

.card dl + dl {
  border-left: 1px solid #eaeded;
}

dt {
  color: #545b64;
}

dd {
  display: flex;
  align-items: center;
  gap: 5px;
  height: 22px;
}

dd + dt {
  margin-top: 12px;
}

dd .status {
  margin-left: -1px;
}

.help {
  flex: none;
  width: 32px;
  padding-top: 9px;
}

.help button {
  margin: 0 auto;
}

.help svg {
  width: 14px;
  height: 14px;
}

/* Footer */
footer {
  flex: none;
  display: flex;
  align-items: center;
  height: 23px;
  padding: 0 16px;
  background: #232f3e;
  color: #fff;
  font-family: Roboto, "Noto Sans CJK JP", sans-serif;
  font-size: 10px;
  font-weight: 500;
  white-space: nowrap;
}

footer button {
  font-weight: bold;
}

footer p {
  display: flex;
  align-items: center;
  gap: 2px;
  margin: 0 auto 0 18px;
  color: #aab7b8;
  font-weight: normal;
}

footer p a {
  display: flex;
  align-items: center;
  gap: 3px;
  margin: 0;
  color: #fff;
  font-weight: 500;
}

footer > a {
  margin-left: 20px;
}

footer .copyright {
  margin-right: 4px;
}

/* Taskbar */
.taskbar {
  flex: none;
  display: flex;
  align-items: center;
  height: 40px;
  background: #2b2b2b;
  color: #fff;
}

.taskbar button {
  position: relative;
  width: 48px;
  height: 40px;
}

.taskbar button svg {
  width: 24px;
  height: 24px;
}

.apps {
  display: flex;
  gap: 1px;
  margin-left: 3px;
}

.taskbar .current {
  background: #565656;
  border-bottom: 3px solid #76b9ed;
}

.open::after {
  content: "";
  position: absolute;
  right: 4px;
  bottom: 0;
  left: 4px;
  height: 3px;
  background: #76b9ed;
}

.more::after {
  background: linear-gradient(to right, #76b9ed 32px, #4f7ba0 32px);
}

.badge {
  position: absolute;
  right: 7px;
  bottom: 4px;
  width: 16px;
  height: 16px;
  border-radius: 50%;
  background: #c4314b;
  font-weight: bold;
  line-height: 16px;
  text-align: center;
}

.tray {
  display: flex;
  align-items: center;
  gap: 8px;
  margin-left: auto;
}

.tray svg {
  width: 16px;
  height: 16px;
}

.tray .line {
  fill: none;
  stroke: #fff;
  stroke-width: 1;
}

.ime {
  width: 16px;
  margin-right: 4px;
  font-size: 17px;
  text-align: center;
}

.clock {
  width: 90px;
  text-align: center;
}

.taskbar .notice {
  width: 20px;
  margin-right: 18px;
}

.taskbar .notice svg {
  width: 18px;
  height: 18px;
}

.taskbar::after {
  content: "";
  width: 5px;
  height: 40px;
  border-left: 1px solid #6a6a6a;
}
```
